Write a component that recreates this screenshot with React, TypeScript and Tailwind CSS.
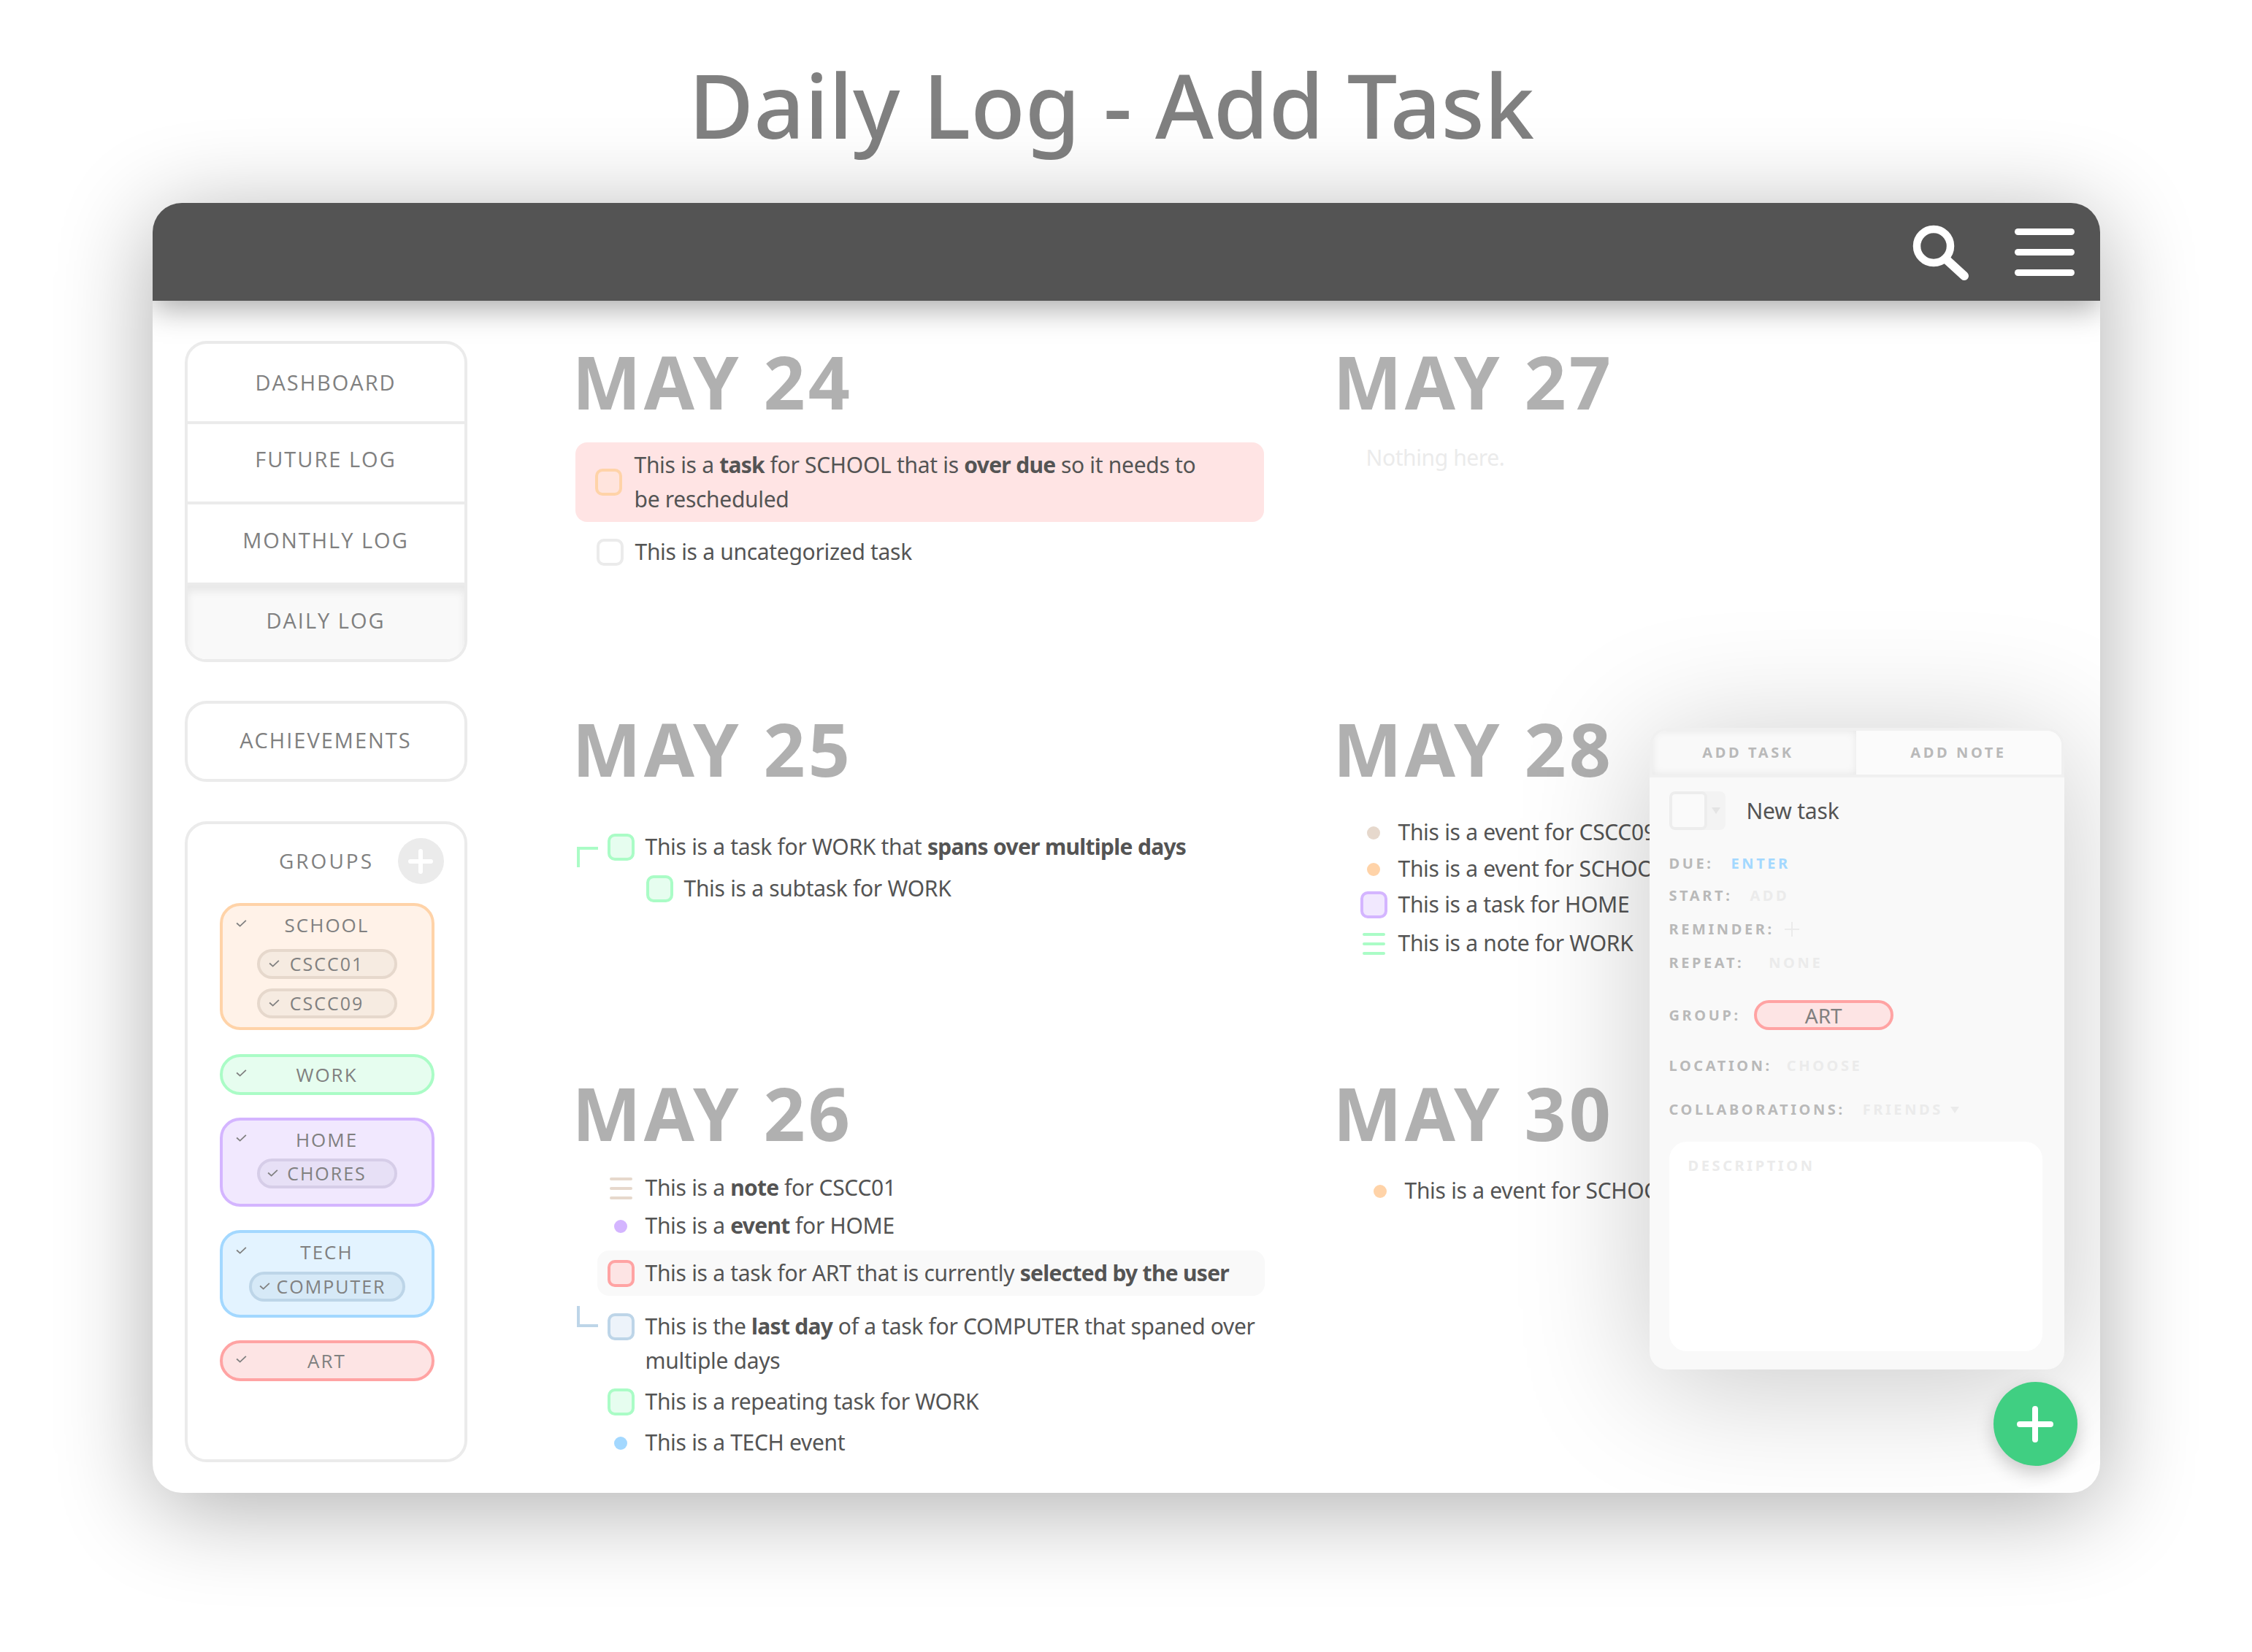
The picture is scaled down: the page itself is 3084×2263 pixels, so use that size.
import React from 'react';

const body = "font-['Noto_Sans',sans-serif]";
const label = "font-['Open_Sans',sans-serif]";

const Check: React.FC<{ className?: string }> = ({ className }) => (
  <svg viewBox="0 0 16 11" className={`w-[15px] h-[10px] ${className ?? ''}`} fill="none" stroke="#808080" strokeWidth="2">
    <polyline points="1,5 6,9.5 15,1" />
  </svg>
);

const Box: React.FC<{ className: string }> = ({ className }) => (
  <div className={`w-[37px] h-[37px] shrink-0 rounded-[10px] border-4 ${className}`} />
);

const Dot: React.FC<{ className: string }> = ({ className }) => (
  <div className="w-[37px] h-[37px] shrink-0 flex items-center justify-center">
    <div className={`w-[18px] h-[18px] rounded-full ${className}`} />
  </div>
);

const NoteIcon: React.FC<{ className: string }> = ({ className }) => (
  <div className="w-[37px] h-[37px] shrink-0 flex flex-col items-center justify-center gap-[9px]">
    <div className={`w-[31px] h-[4px] rounded-full ${className}`} />
    <div className={`w-[31px] h-[4px] rounded-full ${className}`} />
    <div className={`w-[31px] h-[4px] rounded-full ${className}`} />
  </div>
);

const Strong: React.FC<{ children: React.ReactNode }> = ({ children }) => (
  <b className="tracking-[-0.7px]">{children}</b>
);

const Row: React.FC<{ className?: string; center?: boolean; icon: React.ReactNode; children: React.ReactNode }> = ({ className, center, icon, children }) => (
  <div className={`relative flex ${center ? 'items-center' : 'items-start'} gap-[15px] text-[30px] leading-[47px] text-[#545454] tracking-[-0.3px] ${className ?? ''}`}>
    <div className="h-[47px] flex items-center">{icon}</div>
    <div className="-mt-[1px]">{children}</div>
  </div>
);

const DayHeading: React.FC<{ children: React.ReactNode }> = ({ children }) => (
  <h2 className={`h-[112px] leading-[104px] -ml-[4px] text-[100px] font-bold text-[#b0b0b0] tracking-[4px] ${body}`}>{children}</h2>
);

const SubGroup: React.FC<{ name: string; className: string; wide?: boolean; checkLeft: string; textClass?: string }> = ({ name, className, wide, checkLeft, textClass }) => (
  <div className={`relative h-[41px] rounded-full border-4 flex items-center justify-center ${wide ? 'w-[214px]' : 'w-[192px]'} ${className}`}>
    <Check className={`absolute top-[11px] ${checkLeft}`} />
    <span className={`text-[25px] tracking-[2px] leading-none ${textClass ?? ''}`}>{name}</span>
  </div>
);

const Group: React.FC<{ name: string; className: string; mt: string; children?: React.ReactNode; inner?: string }> = ({ name, className, mt, children, inner }) => (
  <div className={`w-[294px] border-4 rounded-[28px] flex flex-col items-center ${children ? 'pt-[6px] pb-[12px]' : 'h-[56px] justify-center'} ${mt} ${className}`}>
    <div className="relative w-full h-[40px] flex items-center justify-center">
      <Check className="absolute left-[18px] top-[13px]" />
      <span className="text-[26px] tracking-[2px] leading-none">{name}</span>
    </div>
    {children && <div className={`flex flex-col items-center gap-[13px] ${inner ?? ''}`}>{children}</div>}
  </div>
);

const FormRow: React.FC<{ name: string; className: string; children?: React.ReactNode }> = ({ name, className, children }) => (
  <div className={`flex items-center h-[30px] text-[20px] font-bold tracking-[3.6px] leading-none ${className}`}>
    <span className="text-[#b9b9b9]">{name}</span>
    {children}
  </div>
);

const App: React.FC = () => {
  return (
    <div className="w-[3084px] h-[2263px] bg-white overflow-hidden flex flex-col items-center">
      <h1 className={`h-[278px] flex items-center pt-[8px] pr-[40px] text-[122px] font-medium text-[#808080] ${body}`}>
        Daily Log - Add Task
      </h1>

      <div className="relative w-[2667px] h-[1767px] bg-white rounded-[40px] overflow-hidden shadow-[0_20px_130px_rgba(0,0,0,0.32)]">
        <header className="relative z-10 h-[134px] bg-[#545454] flex items-center justify-end pr-[35px] gap-[61px] shadow-[0_10px_40px_rgba(0,0,0,0.35)]">
          <svg viewBox="0 0 80 84" className="w-[80px] h-[84px] mt-[3px]" fill="none" stroke="white" strokeWidth="10.5" strokeLinecap="round">
            <circle cx="30" cy="32" r="23" />
            <line x1="48" y1="51" x2="72" y2="73" strokeWidth="12" />
          </svg>
          <div className="flex flex-col gap-[19px]">
            <div className="w-[82px] h-[9px] rounded-full bg-white" />
            <div className="w-[82px] h-[9px] rounded-full bg-white" />
            <div className="w-[82px] h-[9px] rounded-full bg-white" />
          </div>
        </header>

        <div className="flex">
          <aside className={`ml-[44px] mt-[55px] w-[387px] shrink-0 text-[#808080] ${label}`}>
            <nav className="h-[440px] border-4 border-[#ebebeb] rounded-[30px] overflow-hidden text-[29px] tracking-[2px] flex flex-col">
              <div className="h-[110px] shrink-0 flex items-center justify-center border-b-4 border-[#ebebeb]">DASHBOARD</div>
              <div className="h-[110px] shrink-0 flex items-center justify-center pb-[10px] border-b-4 border-[#ebebeb]">FUTURE LOG</div>
              <div className="h-[111px] shrink-0 flex items-center justify-center pb-[10px] border-b-4 border-[#ebebeb]">MONTHLY LOG</div>
              <div className="flex-1 flex items-center justify-center pb-[6px] bg-[#f9f9f9] shadow-[inset_0_8px_12px_rgba(0,0,0,0.07)]">DAILY LOG</div>
            </nav>
            <div className="mt-[53px] h-[111px] pb-[3px] border-4 border-[#ebebeb] rounded-[30px] flex items-center justify-center text-[29px] tracking-[2px]">
              ACHIEVEMENTS
            </div>
            <div className="mt-[54px] h-[878px] border-4 border-[#ebebeb] rounded-[30px] px-[44px]">
              <div className="relative h-[108px] flex items-center justify-center text-[28px] tracking-[3px]">
                <span className="-mt-[9px] ml-[2px]">GROUPS</span>
                <div className="absolute right-[-16px] top-[19px] w-[63px] h-[63px] rounded-full bg-[#ebebeb] flex items-center justify-center">
                  <svg viewBox="0 0 36 36" className="w-[36px] h-[36px]" stroke="white" strokeWidth="6" strokeLinecap="round">
                    <path d="M18 4v28M4 18h28" />
                  </svg>
                </div>
              </div>
              <Group name="SCHOOL" mt="" className="bg-[#fff2e8] border-[#ffd3a8]">
                <div className="mt-[13px] flex flex-col gap-[13px]">
                  <SubGroup name="CSCC01" checkLeft="left-[12px]" className="bg-[#f6ebe1] border-[#e6d8cc]" />
                  <SubGroup name="CSCC09" checkLeft="left-[12px]" className="bg-[#f6ebe1] border-[#e6d8cc]" />
                </div>
              </Group>
              <Group name="WORK" mt="mt-[33px]" className="bg-[#e6fdef] border-[#aafcc6]" />
              <Group name="HOME" mt="mt-[31px]" className="bg-[#f1e8fe] border-[#d4b5ff]" inner="mt-[6px] mb-[9px]">
                <SubGroup name="CHORES" checkLeft="left-[10px]" className="bg-[#e7e0f6] border-[#d6cde8]" />
              </Group>
              <Group name="TECH" mt="mt-[32px]" className="bg-[#e3f3ff] border-[#a3d8ff]" inner="mt-[7px] mb-[6px]">
                <SubGroup name="COMPUTER" wide checkLeft="left-[10px]" textClass="pl-[12px]" className="bg-[#d6e9f7] border-[#bdd5e8]" />
              </Group>
              <Group name="ART" mt="mt-[31px]" className="bg-[#fde4e4] border-[#ffa3a3]" />
            </div>
          </aside>

          <main className={`ml-[148px] mt-[58px] grid grid-cols-[1042px_700px] grid-rows-[503px_499px_auto] ${body}`}>
            <section>
              <DayHeading>MAY 24</DayHeading>
              <div className="mt-[24px] w-[943px] rounded-[16px] bg-[#ffe4e4] py-[8px] pl-[27px]">
                <Row center className="gap-[17px]" icon={<Box className="border-[#ffd3a8] bg-[#ffe4dd]" />}>
                  This is a <Strong>task</Strong> for SCHOOL that is <Strong>over due</Strong> so it needs to
                  <br />
                  be rescheduled
                </Row>
              </div>
              <Row className="mt-[18px] pl-[29px] gap-[16px]" icon={<Box className="border-[#ebebeb] bg-white" />}>
                This is a uncategorized task
              </Row>
            </section>

            <section>
              <DayHeading>MAY 27</DayHeading>
              <div className="mt-[21px] pl-[41px] text-[30px] leading-[47px] tracking-[-0.4px] text-[#ebebeb]">Nothing here.</div>
            </section>

            <section>
              <DayHeading>MAY 25</DayHeading>
              <Row className="mt-[52px] pl-[44px]" icon={<Box className="border-[#aafcc6] bg-[#e6fdef]" />}>
                <div className="absolute left-[2px] top-[23px] w-[29px] h-[28px] border-l-4 border-t-4 border-[#aafcc6]" />
                This is a task for WORK that <Strong>spans over multiple days</Strong>
              </Row>
              <Row className="mt-[10px] pl-[97px] gap-[14px]" icon={<Box className="border-[#aafcc6] bg-[#e6fdef]" />}>
                This is a subtask for WORK
              </Row>
            </section>

            <section>
              <DayHeading>MAY 28</DayHeading>
              <div className="pl-[33px]">
                <Row className="mt-[32px] gap-[14px]" icon={<Dot className="bg-[#e6d8cc]" />}>This is a event for CSCC09</Row>
                <Row className="mt-[3px] gap-[14px]" icon={<Dot className="bg-[#ffd3a8]" />}>This is a event for SCHOOL</Row>
                <Row className="mt-[2px] gap-[14px]" icon={<Box className="border-[#d4b5ff] bg-[#f1e8fe]" />}>This is a task for HOME</Row>
                <Row className="mt-[6px] gap-[14px]" icon={<NoteIcon className="bg-[#aafcc6]" />}>This is a note for WORK</Row>
              </div>
            </section>

            <section className="w-[943px]">
              <DayHeading>MAY 26</DayHeading>
              <Row className="mt-[20px] pl-[44px]" icon={<NoteIcon className="bg-[#e6d8cc]" />}>
                This is a <Strong>note</Strong> for CSCC01
              </Row>
              <Row className="mt-[5px] pl-[44px]" icon={<Dot className="bg-[#d4b5ff]" />}>
                This is a <Strong>event</Strong> for HOME
              </Row>
              <div className="mt-[10px] ml-[30px] w-[914px] h-[62px] rounded-[16px] bg-[#f9f9f9] pl-[14px] flex items-center">
                <Row icon={<Box className="border-[#ffa3a3] bg-[#fde4e4]" />}>
                  This is a task for ART that is currently <Strong>selected by the user</Strong>
                </Row>
              </div>
              <Row className="mt-[19px] pl-[44px]" icon={<Box className="border-[#bdd5e8] bg-[#edf3fa]" />}>
                <div className="absolute left-[2px] top-[-5px] w-[29px] h-[29px] border-l-4 border-b-4 border-[#bdd5e8]" />
                This is the <Strong>last day</Strong> of a task for COMPUTER that spaned over
                <br />
                multiple days
              </Row>
              <Row className="mt-[10px] pl-[44px]" icon={<Box className="border-[#aafcc6] bg-[#e6fdef]" />}>
                This is a repeating task for WORK
              </Row>
              <Row className="mt-[9px] pl-[44px]" icon={<Dot className="bg-[#a3d8ff]" />}>
                This is a TECH event
              </Row>
            </section>

            <section>
              <DayHeading>MAY 30</DayHeading>
              <Row className="mt-[24px] pl-[42px] gap-[14px]" icon={<Dot className="bg-[#ffd3a8]" />}>This is a event for SCHOOL</Row>
            </section>
          </main>
        </div>

        {/* add task popup */}
        <div className={`absolute z-20 left-[2050px] top-[719px] w-[568px] h-[879px] rounded-[24px] bg-[#f9f9f9] shadow-[0_20px_180px_rgba(0,0,0,0.22)] ${body}`}>
          <div className="h-[68px] flex border-4 border-[#f0f0f0] rounded-t-[24px] overflow-hidden text-[20px] font-bold tracking-[3.6px] text-[#b9b9b9]">
            <div className="w-[279px] pr-[16px] flex items-center justify-center bg-[#f9f9f9] shadow-[inset_0_0_12px_rgba(0,0,0,0.08)]">ADD TASK</div>
            <div className="flex-1 flex items-center justify-center bg-[#fbfbfb]">ADD NOTE</div>
          </div>
          <div className="px-[27px]">
            <div className="mt-[19px] flex items-center">
              <div className="w-[77px] h-[53px] rounded-[8px] bg-[#f3f3f3] flex overflow-hidden">
                <div className="w-[52px] h-full rounded-[8px] border-4 border-[#ededed] bg-[#fafafa]" />
                <div className="flex-1 flex items-center justify-center">
                  <div className="w-0 h-0 border-x-[6px] border-x-transparent border-t-[9px] border-t-[#e4e4e4]" />
                </div>
              </div>
              <span className="ml-[29px] text-[30px] text-[#545454] tracking-[-0.2px]">New task</span>
            </div>
            <FormRow name="DUE:" className="mt-[31px]">
              <span className="ml-[24px] text-[#a3d8ff]">ENTER</span>
            </FormRow>
            <FormRow name="START:" className="mt-[14px]">
              <span className="ml-[24px] text-[#ebebeb]">ADD</span>
            </FormRow>
            <FormRow name="REMINDER:" className="mt-[16px]">
              <svg viewBox="0 0 20 20" className="ml-[14px] w-[20px] h-[20px]" stroke="#ebebeb" strokeWidth="2">
                <path d="M10 0v20M0 10h20" />
              </svg>
            </FormRow>
            <FormRow name="REPEAT:" className="mt-[16px]">
              <span className="ml-[34px] text-[#ebebeb]">NONE</span>
            </FormRow>
            <FormRow name="GROUP:" className="mt-[36px] h-[41px]">
              <span className="ml-[18px] w-[191px] h-[41px] rounded-full border-4 border-[#ffa3a3] bg-[#fde4e4] flex items-center justify-center text-[28px] font-normal tracking-normal text-[#808080]">
                ART
              </span>
            </FormRow>
            <FormRow name="LOCATION:" className="mt-[34px]">
              <span className="ml-[20px] text-[#ebebeb]">CHOOSE</span>
            </FormRow>
            <FormRow name="COLLABORATIONS:" className="mt-[30px]">
              <span className="ml-[24px] text-[#ebebeb]">FRIENDS</span>
              <div className="ml-[10px] w-0 h-0 border-x-[6px] border-x-transparent border-t-[9px] border-t-[#ebebeb]" />
            </FormRow>
            <div className="mt-[29px] w-[511px] h-[287px] rounded-[24px] bg-white pl-[26px] pt-[22px] text-[20px] font-bold tracking-[3.6px] leading-[22px] text-[#ebebeb]">
              DESCRIPTION
            </div>
          </div>
        </div>

        <button className="absolute z-20 left-[2521px] top-[1615px] w-[115px] h-[115px] rounded-full bg-[#40cf82] flex items-center justify-center shadow-[0_10px_24px_rgba(0,0,0,0.2)]">
          <svg viewBox="0 0 50 50" className="w-[50px] h-[50px]" stroke="white" strokeWidth="8" strokeLinecap="round">
            <path d="M25 4v42M4 25h42" />
          </svg>
        </button>
      </div>
    </div>
  );
};

export default App;
